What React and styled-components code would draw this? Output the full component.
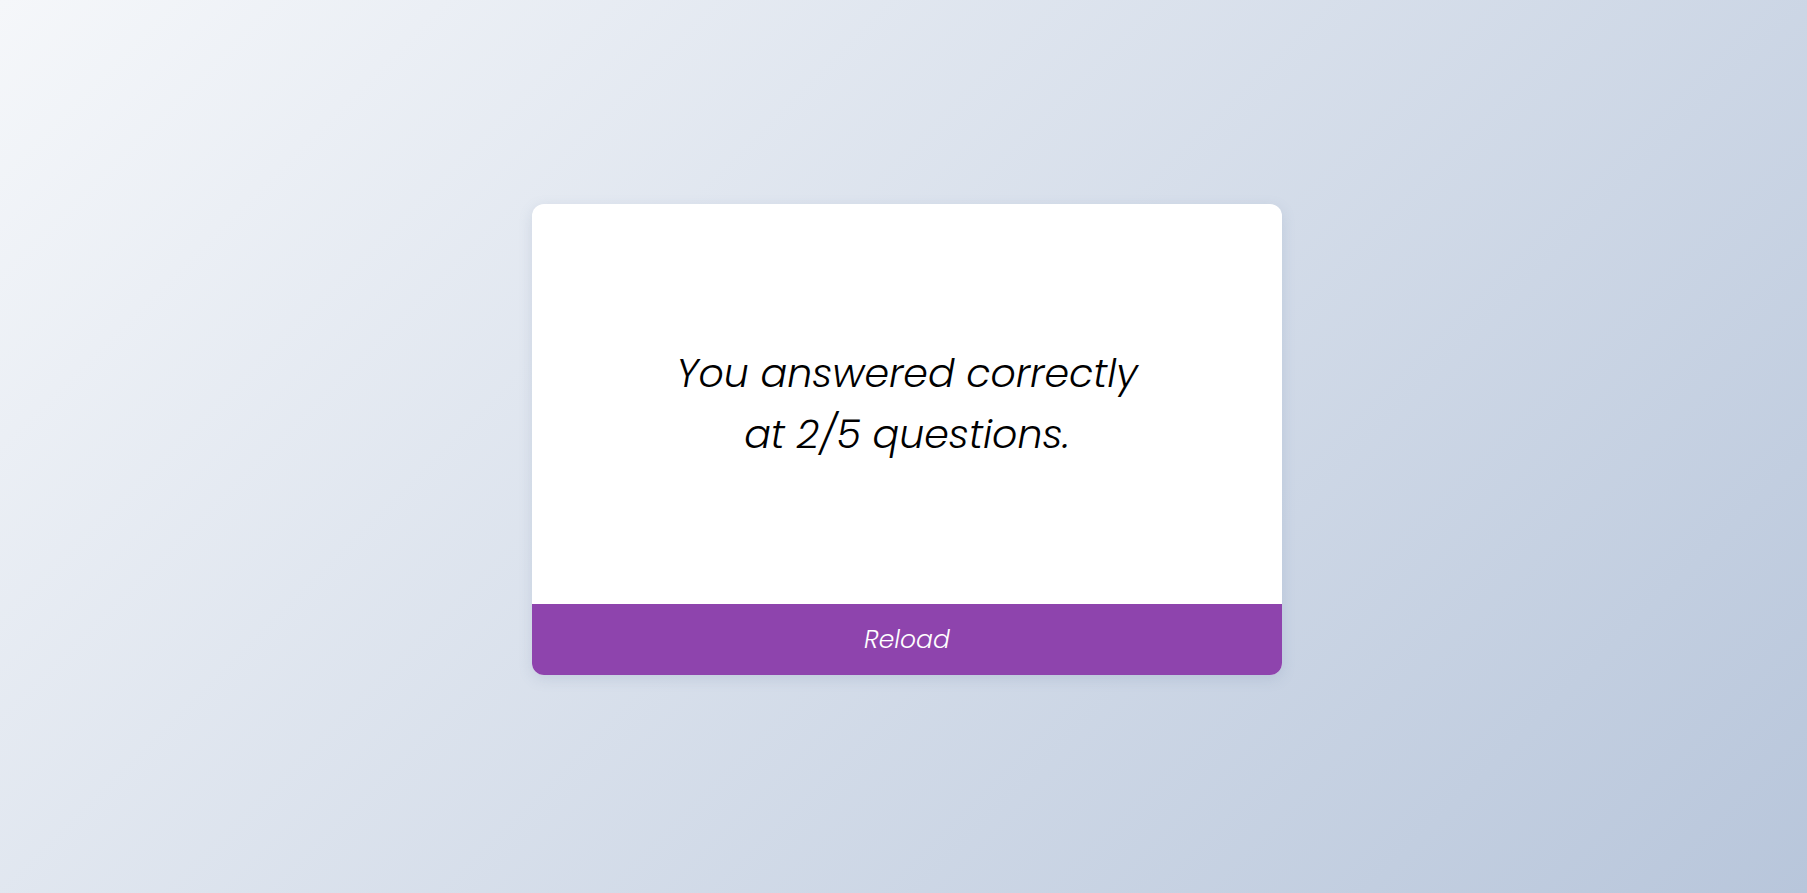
import React from "react";
import styled, { createGlobalStyle } from "styled-components";

const Global = createGlobalStyle`
  html, body { margin: 0; padding: 0; height: 100%; }
  body {
    font-family: "Poppins", "Inter", "Lato", sans-serif;
    background: linear-gradient(135deg, #f5f7fa 0%, #b8c6db 100%);
    min-height: 100vh;
  }
  #root { min-height: 100vh; }
`;

const Page = styled.main`
  min-height: 100vh;
  display: flex;
  align-items: center;
  justify-content: center;
  padding: 0 0 14px 7px;
  box-sizing: border-box;
`;

const Card = styled.section`
  width: 750px;
  background: #fff;
  border-radius: 12px;
  overflow: hidden;
  box-shadow: 0 4px 14px rgba(100, 120, 160, 0.18);
  display: flex;
  flex-direction: column;
`;

const Body = styled.div`
  height: 400px;
  display: flex;
  align-items: center;
  justify-content: center;
`;

const Message = styled.p`
  margin: 0;
  text-align: center;
  font-family: "Poppins", "Inter", "Lato", sans-serif;
  font-style: italic;
  font-weight: 300;
  font-size: 39.5px;
  line-height: 61px;
  color: #000;
`;

const ReloadButton = styled.button`
  height: 71px;
  border: none;
  background: #8e44ad;
  color: #fff;
  font-family: "Poppins", "Inter", "Lato", sans-serif;
  font-style: italic;
  font-weight: 300;
  font-size: 25px;
  cursor: pointer;
  width: 100%;
`;

export default function App() {
  return (
    <>
      <Global />
      <Page>
        <Card>
          <Body>
            <Message>
              You answered correctly
              <br />
              at 2/5 questions.
            </Message>
          </Body>
          <ReloadButton>Reload</ReloadButton>
        </Card>
      </Page>
    </>
  );
}
